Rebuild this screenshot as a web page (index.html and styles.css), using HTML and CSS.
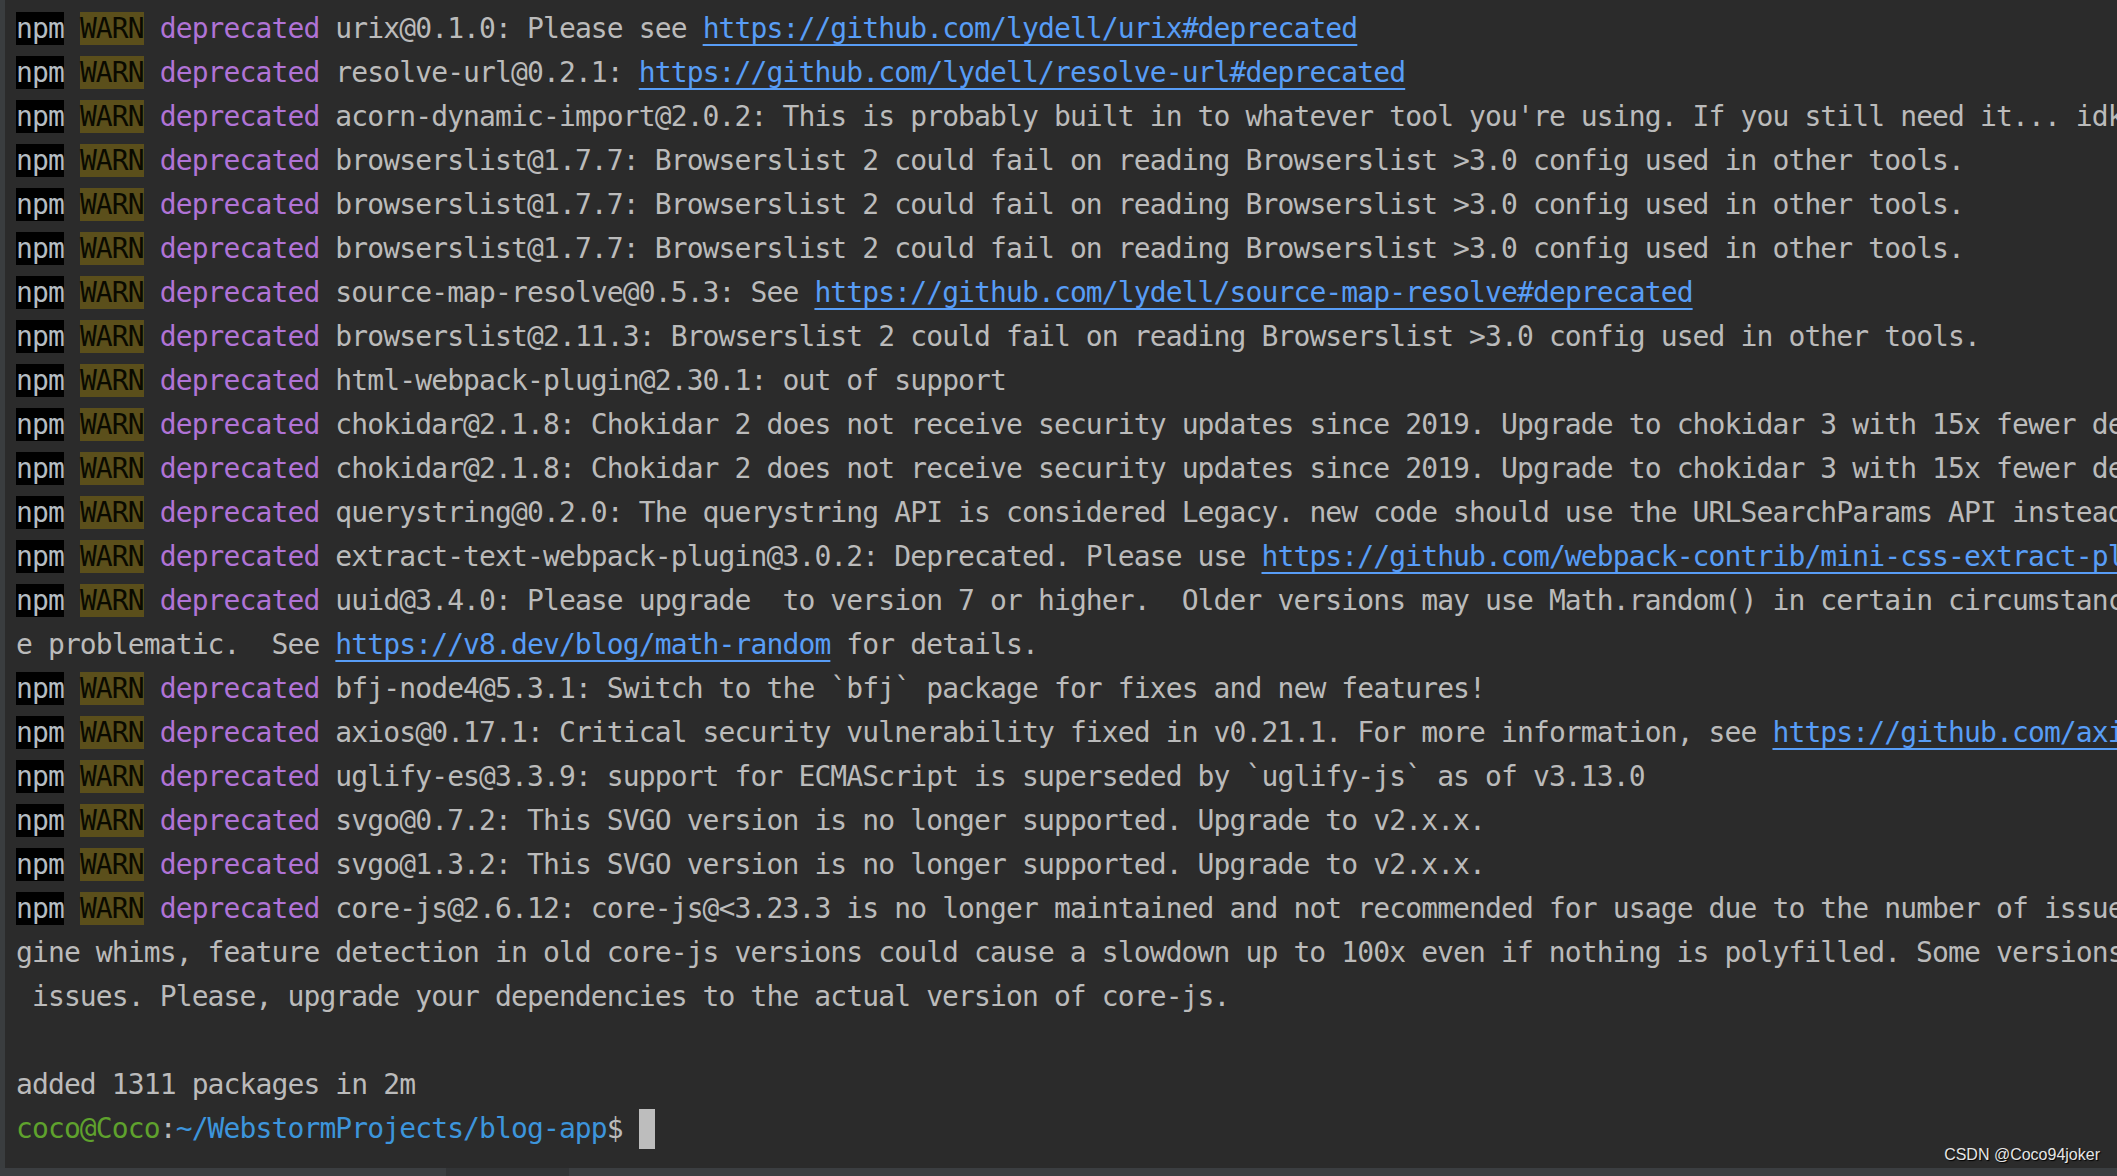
FILE: index.html
```html
<!DOCTYPE html>
<html lang="en">
<head>
    <meta charset="UTF-8">
    <meta name="viewport" content="width=device-width, initial-scale=1.0">
    <title>Terminal - blog-app</title>
    <link rel="stylesheet" href="styles.css">
</head>
<body>

    <div class="window">
        <div class="terminal">
            <div class="line"><span class="npm">npm</span> <span class="warn">WARN</span> <span class="dep">deprecated</span> urix@0.1.0: Please see <a class="link">https://github.com/lydell/urix#deprecated</a></div>
            <div class="line"><span class="npm">npm</span> <span class="warn">WARN</span> <span class="dep">deprecated</span> resolve-url@0.2.1: <a class="link">https://github.com/lydell/resolve-url#deprecated</a></div>
            <div class="line"><span class="npm">npm</span> <span class="warn">WARN</span> <span class="dep">deprecated</span> acorn-dynamic-import@2.0.2: This is probably built in to whatever tool you're using. If you still need it... idk</div>
            <div class="line"><span class="npm">npm</span> <span class="warn">WARN</span> <span class="dep">deprecated</span> browserslist@1.7.7: Browserslist 2 could fail on reading Browserslist &gt;3.0 config used in other tools.</div>
            <div class="line"><span class="npm">npm</span> <span class="warn">WARN</span> <span class="dep">deprecated</span> browserslist@1.7.7: Browserslist 2 could fail on reading Browserslist &gt;3.0 config used in other tools.</div>
            <div class="line"><span class="npm">npm</span> <span class="warn">WARN</span> <span class="dep">deprecated</span> browserslist@1.7.7: Browserslist 2 could fail on reading Browserslist &gt;3.0 config used in other tools.</div>
            <div class="line"><span class="npm">npm</span> <span class="warn">WARN</span> <span class="dep">deprecated</span> source-map-resolve@0.5.3: See <a class="link">https://github.com/lydell/source-map-resolve#deprecated</a></div>
            <div class="line"><span class="npm">npm</span> <span class="warn">WARN</span> <span class="dep">deprecated</span> browserslist@2.11.3: Browserslist 2 could fail on reading Browserslist &gt;3.0 config used in other tools.</div>
            <div class="line"><span class="npm">npm</span> <span class="warn">WARN</span> <span class="dep">deprecated</span> html-webpack-plugin@2.30.1: out of support</div>
            <div class="line"><span class="npm">npm</span> <span class="warn">WARN</span> <span class="dep">deprecated</span> chokidar@2.1.8: Chokidar 2 does not receive security updates since 2019. Upgrade to chokidar 3 with 15x fewer dependencies</div>
            <div class="line"><span class="npm">npm</span> <span class="warn">WARN</span> <span class="dep">deprecated</span> chokidar@2.1.8: Chokidar 2 does not receive security updates since 2019. Upgrade to chokidar 3 with 15x fewer dependencies</div>
            <div class="line"><span class="npm">npm</span> <span class="warn">WARN</span> <span class="dep">deprecated</span> querystring@0.2.0: The querystring API is considered Legacy. new code should use the URLSearchParams API instead.</div>
            <div class="line"><span class="npm">npm</span> <span class="warn">WARN</span> <span class="dep">deprecated</span> extract-text-webpack-plugin@3.0.2: Deprecated. Please use <a class="link">https://github.com/webpack-contrib/mini-css-extract-plugin</a></div>
            <div class="line"><span class="npm">npm</span> <span class="warn">WARN</span> <span class="dep">deprecated</span> uuid@3.4.0: Please upgrade  to version 7 or higher.  Older versions may use Math.random() in certain circumstances, which is known to b</div>
            <div class="line">e problematic.  See <a class="link">https://v8.dev/blog/math-random</a> for details.</div>
            <div class="line"><span class="npm">npm</span> <span class="warn">WARN</span> <span class="dep">deprecated</span> bfj-node4@5.3.1: Switch to the `bfj` package for fixes and new features!</div>
            <div class="line"><span class="npm">npm</span> <span class="warn">WARN</span> <span class="dep">deprecated</span> axios@0.17.1: Critical security vulnerability fixed in v0.21.1. For more information, see <a class="link">https://github.com/axios/axios/pull/3410</a></div>
            <div class="line"><span class="npm">npm</span> <span class="warn">WARN</span> <span class="dep">deprecated</span> uglify-es@3.3.9: support for ECMAScript is superseded by `uglify-js` as of v3.13.0</div>
            <div class="line"><span class="npm">npm</span> <span class="warn">WARN</span> <span class="dep">deprecated</span> svgo@0.7.2: This SVGO version is no longer supported. Upgrade to v2.x.x.</div>
            <div class="line"><span class="npm">npm</span> <span class="warn">WARN</span> <span class="dep">deprecated</span> svgo@1.3.2: This SVGO version is no longer supported. Upgrade to v2.x.x.</div>
            <div class="line"><span class="npm">npm</span> <span class="warn">WARN</span> <span class="dep">deprecated</span> core-js@2.6.12: core-js@&lt;3.23.3 is no longer maintained and not recommended for usage due to the number of issues. Because of the V8 en</div>
            <div class="line">gine whims, feature detection in old core-js versions could cause a slowdown up to 100x even if nothing is polyfilled. Some versions have web compatibility</div>
            <div class="line"> issues. Please, upgrade your dependencies to the actual version of core-js.</div>
            <div class="line"> </div>
            <div class="line">added 1311 packages in 2m</div>
            <div class="line"><span class="user">coco@Coco</span>:<span class="path">~/WebstormProjects/blog-app</span>$ <span class="cursor"></span></div>
        </div>

        <div class="hscroll">
            <div class="thumb"></div>
        </div>

        <div class="watermark">CSDN @Coco94joker</div>
    </div>

</body>
</html>
```

FILE: styles.css
```css
body {
    margin: 0;
    background-color: #2b2b2b;
    overflow: hidden;
}
.window {
    position: relative;
    height: 1176px;
    display: flex;
    flex-direction: column;
}
.terminal {
    flex: 1;
    overflow: hidden;
    border-left: 5px solid #3a3d3f;
    padding: 7px 0 0 11px;
    font-family: "DejaVu Sans Mono", "Liberation Mono", monospace;
    font-size: 28px;
    letter-spacing: -0.89px;
    line-height: 44px;
    color: #bbbbbb;
}
.line {
    white-space: pre;
    height: 44px;
}
.npm {
    background-color: #000000;
    color: #b4bcc2;
}
.warn {
    background-color: #5b4f1b;
    color: #0a0a00;
}
.dep {
    color: #b073d6;
}
.link {
    color: #589df6;
    text-decoration: underline;
    text-decoration-thickness: 2px;
    text-underline-offset: 6px;
}
.user {
    color: #5fa22d;
}
.path {
    color: #3d95dc;
}
.cursor {
    display: inline-block;
    width: 16px;
    height: 40px;
    margin-top: 2px;
    vertical-align: top;
    background-color: #bdbdbd;
}
.hscroll {
    height: 8px;
    background-color: #3b3e41;
    display: flex;
}
.thumb {
    width: 446px;
    background-color: #3b3e41;
    border-right: 123px solid #323436;
}
.watermark {
    position: absolute;
    right: 17px;
    bottom: 12px;
    font-family: "Liberation Sans", Arial, sans-serif;
    font-size: 16px;
    color: #e6e6e6;
    text-shadow: 1px 1px 1px #000000;
}
```
